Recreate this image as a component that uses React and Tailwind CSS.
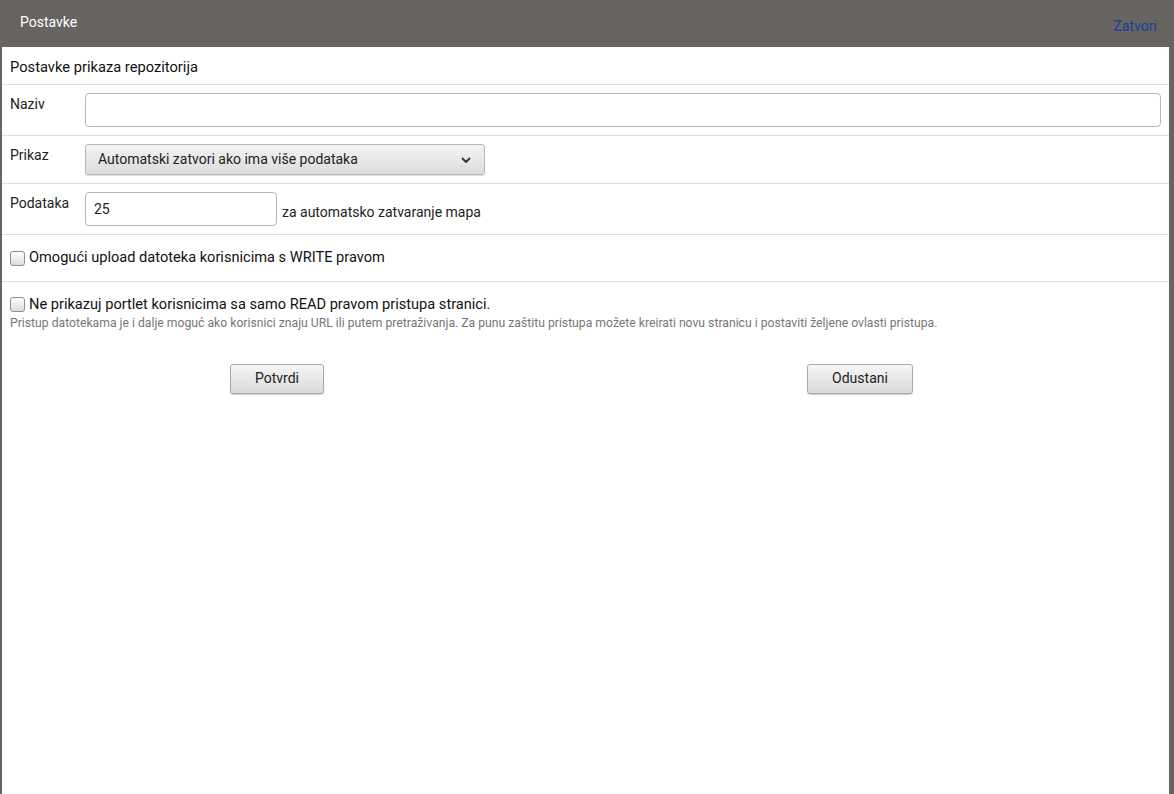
import React from 'react';

function Checkbox() {
    return (
        <span className="inline-block w-[15px] h-[15px] shrink-0 rounded-[3px] border border-[#8f8f8f] bg-gradient-to-b from-white to-[#dcdcdc]" />
    );
}

function Row({ label, children, className = '' }) {
    return (
        <div className={`flex items-start border-b border-[#dddddd] px-[8px] ${className}`}>
            <div className="w-[75px] shrink-0 pt-[1px] text-[14px] text-[#222]">{label}</div>
            {children}
        </div>
    );
}

export default function App() {
    return (
        <div
            className="w-[1174px] h-[794px] bg-[#686462] flex flex-col overflow-hidden"
            style={{ fontFamily: 'Roboto, "Noto Sans", sans-serif' }}
        >
            {/* Header */}
            <div className="h-[47px] shrink-0 flex items-start justify-between pl-[20px] pr-[17px]">
                <span className="text-white text-[14px] mt-[12px]">Postavke</span>
                <a className="text-[#1c3f94] text-[14px] mt-[16px] cursor-pointer">Zatvori</a>
            </div>

            {/* Body */}
            <div className="flex-1 ml-[2px] mr-[5px] bg-white">
                <div className="h-[38px] flex items-center pt-[3px] px-[8px] border-b border-[#dddddd] text-[14.7px] text-[#111]">
                    Postavke prikaza repozitorija
                </div>

                <Row label="Naziv" className="h-[51px] pt-[8px]">
                    <input
                        type="text"
                        className="h-[34px] flex-1 rounded-[4px] border border-[#b5b5b5] outline-none px-[10px] text-[14px]"
                    />
                </Row>

                <Row label="Prikaz" className="h-[48px] pt-[8px]">
                    <div className="h-[31px] w-[400px] flex items-center justify-between rounded-[3px] border border-[#b8b8b8] bg-gradient-to-b from-[#f3f3f3] to-[#dcdcdc] pl-[12px] pr-[12px] text-[14px] text-[#222] shadow-[0_1px_1px_rgba(0,0,0,0.15)]">
                        <span>Automatski zatvori ako ima više podataka</span>
                        <svg width="12" height="12" viewBox="0 0 12 12" fill="none">
                            <path d="M2.5 4.5 L6 8 L9.5 4.5" stroke="#333" strokeWidth="1.8" strokeLinecap="round" strokeLinejoin="round" />
                        </svg>
                    </div>
                </Row>

                <Row label="Podataka" className="h-[51px] pt-[8px]">
                    <input
                        type="text"
                        defaultValue="25"
                        className="h-[34px] w-[192px] rounded-[4px] border border-[#b5b5b5] outline-none px-[8px] text-[14px] text-[#222]"
                    />
                    <span className="ml-[5px] mt-[10px] text-[14px] text-[#222]">za automatsko zatvaranje mapa</span>
                </Row>

                <div className="h-[47px] flex items-center gap-[4px] px-[8px] border-b border-[#dddddd] text-[14.6px] text-[#111]">
                    <Checkbox />
                    <span>Omogući upload datoteka korisnicima s WRITE pravom</span>
                </div>

                <div className="px-[8px] pt-[12px]">
                    <div className="flex items-center gap-[4px] text-[14.6px] text-[#111]">
                        <Checkbox />
                        <span>Ne prikazuj portlet korisnicima sa samo READ pravom pristupa stranici.</span>
                    </div>
                    <div className="text-[12.2px] leading-[15px] text-[#777]">
                        Pristup datotekama je i dalje moguć ako korisnici znaju URL ili putem pretraživanja. Za punu zaštitu pristupa možete kreirati novu stranicu i postaviti željene ovlasti pristupa.
                    </div>
                </div>

                <div className="flex mt-[33px] pl-[228px]">
                    <button className="h-[30px] w-[94px] rounded-[3px] border border-[#a9a9a9] bg-gradient-to-b from-[#f6f6f6] to-[#dadada] text-[14px] text-[#222] shadow-[0_1px_1px_rgba(0,0,0,0.2)]">
                        Potvrdi
                    </button>
                    <button className="ml-[483px] h-[30px] w-[106px] rounded-[3px] border border-[#a9a9a9] bg-gradient-to-b from-[#f6f6f6] to-[#dadada] text-[14px] text-[#222] shadow-[0_1px_1px_rgba(0,0,0,0.2)]">
                        Odustani
                    </button>
                </div>
            </div>
        </div>
    );
}
